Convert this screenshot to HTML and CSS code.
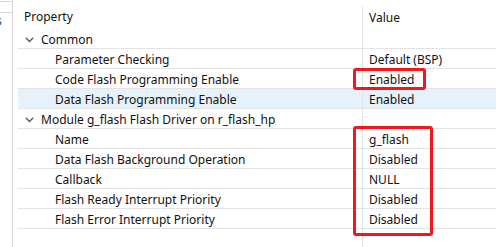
FILE: index.html
```html
<!DOCTYPE html>
<html lang="en">
<head>
  <meta charset="UTF-8">
  <title>Properties</title>
  <link rel="stylesheet" href="styles.css">
</head>
<body>

<div class="view">
  <div class="side">
    <div class="side-tab"></div>
    <span class="side-glyph">s</span>
  </div>

  <div class="props">
    <div class="row head">
      <div class="prop">Property</div>
      <div class="val">Value</div>
    </div>

    <div class="row group">
      <div class="prop"><svg class="chev" width="9" height="6" viewBox="0 0 9 6"><path d="M0.8 0.8 L4.5 4.5 L8.2 0.8" fill="none" stroke="#555" stroke-width="1.3"/></svg>Common</div>
      <div class="val"></div>
    </div>
    <div class="row">
      <div class="prop child">Parameter Checking</div>
      <div class="val">Default (BSP)</div>
    </div>
    <div class="row">
      <div class="prop child">Code Flash Programming Enable</div>
      <div class="val">Enabled</div>
    </div>
    <div class="row selected">
      <div class="prop child">Data Flash Programming Enable</div>
      <div class="val">Enabled</div>
    </div>

    <div class="row group">
      <div class="prop"><svg class="chev" width="9" height="6" viewBox="0 0 9 6"><path d="M0.8 0.8 L4.5 4.5 L8.2 0.8" fill="none" stroke="#555" stroke-width="1.3"/></svg>Module g_flash Flash Driver on r_flash_hp</div>
      <div class="val"></div>
    </div>
    <div class="row">
      <div class="prop child">Name</div>
      <div class="val">g_flash</div>
    </div>
    <div class="row">
      <div class="prop child">Data Flash Background Operation</div>
      <div class="val">Disabled</div>
    </div>
    <div class="row">
      <div class="prop child">Callback</div>
      <div class="val">NULL</div>
    </div>
    <div class="row">
      <div class="prop child">Flash Ready Interrupt Priority</div>
      <div class="val">Disabled</div>
    </div>
    <div class="row">
      <div class="prop child">Flash Error Interrupt Priority</div>
      <div class="val">Disabled</div>
    </div>
    <div class="row filler">
      <div class="prop"></div>
      <div class="val"></div>
    </div>

    <!-- red marks drawn over the value column -->
    <div class="mark mark-one"></div>
    <div class="mark mark-two"></div>
  </div>
</div>

</body>
</html>
```

FILE: styles.css
```css
body {
  margin: 0;
  background-color: #fff;
  font-family: 'Noto Sans', 'Noto Sans CJK SC', sans-serif;
  font-size: 12px;
  color: #111;
}

.view {
  display: flex;
  height: 247px;
  overflow: hidden;
}

.side {
  position: relative;
  width: 12px;
  flex-shrink: 0;
  border-right: 1px solid #d6d6d6;
  overflow: hidden;
}

.side-tab {
  height: 10px;
  border-top: 1px solid #d6d6d6;
  border-bottom: 1px solid #d6d6d6;
  margin-top: 1px;
}

.side-glyph {
  position: absolute;
  left: -4px;
  top: 12px;
  color: #1f3a6e;
  font-size: 12px;
}

.props {
  position: relative;
  flex: 1;
  margin-left: 5px;
}

.row {
  display: flex;
  height: 20px;
  border-bottom: 1px solid #e3e3e3;
  box-sizing: border-box;
  line-height: 21px;
  white-space: nowrap;
}

.row.head {
  height: 29px;
  border-bottom: none;
  line-height: 33px;
}

.row.head .val {
  border-left: 1px solid #e3e3e3;
  margin-top: 6px;
  line-height: 23px;
}

.row.selected {
  background-color: #e5f1fb;
}

.row.filler {
  border-bottom: none;
  height: 20px;
}

.prop {
  width: 344px;
  flex-shrink: 0;
  padding-left: 6px;
  box-sizing: border-box;
  overflow: hidden;
}

.prop.child {
  padding-left: 37px;
}

.val {
  flex: 1;
  border-left: 1px solid #e3e3e3;
  padding-left: 6px;
}

.chev {
  margin: 0 7px 1px 1px;
  vertical-align: middle;
}

.mark {
  position: absolute;
  border: 3px solid #f5161b;
  border-radius: 3px;
  box-sizing: border-box;
}

.mark-one {
  left: 335px;
  top: 68px;
  width: 73px;
  height: 22px;
}

.mark-two {
  left: 335px;
  top: 126px;
  width: 80px;
  height: 110px;
}
```
